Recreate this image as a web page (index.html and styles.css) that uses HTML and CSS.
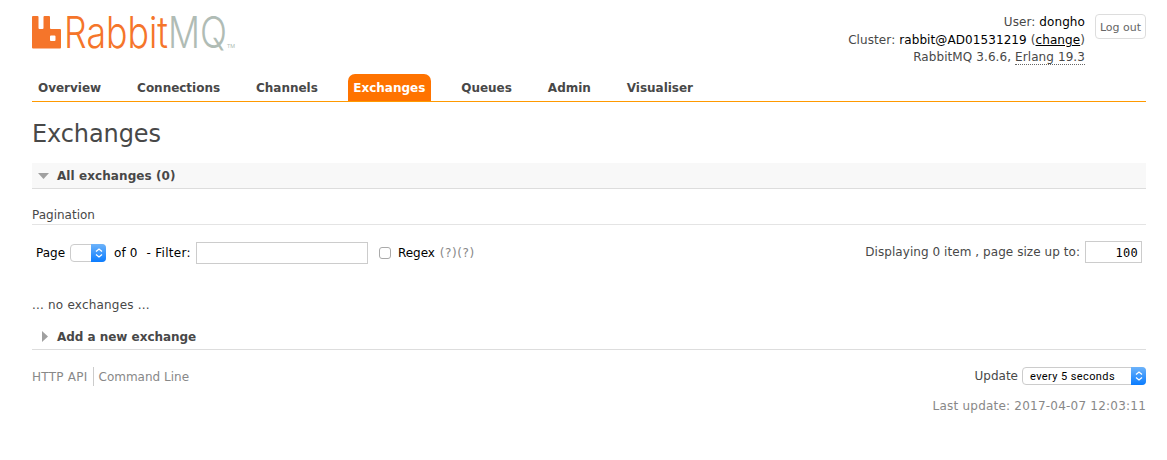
FILE: index.html
```html
<!DOCTYPE html>
<html lang="en">
<head>
<meta charset="utf-8">
<title>RabbitMQ Management</title>
<link rel="stylesheet" href="styles.css">
</head>
<body>
<header class="header">
  <svg class="logo" width="206" height="48" viewBox="0 0 206 48" role="img" aria-label="RabbitMQ">
    <path class="logo-mark" fill-rule="evenodd" d="M0 2Q0 1 1 1H5.500Q6.500 1 6.500 2V13Q6.500 14 7.500 14H10.500Q11.500 14 11.500 13V2Q11.500 1 12.500 1H17Q18 1 18 2V13Q18 14 19 14H28Q29 14 29 15V32.500Q29 33.500 28 33.500H1Q0 33.500 0 32.500ZM18 21.500V25Q18 26 19 26H22.500Q23.500 26 23.500 25V21.500Q23.500 20.500 22.500 20.500H19Q18 20.500 18 21.500Z"/>
    <text class="logo-text rabbit" x="32" y="33" textLength="104" lengthAdjust="spacingAndGlyphs">Rabbit</text>
    <text class="logo-text mq" x="136" y="33" textLength="59" lengthAdjust="spacingAndGlyphs">MQ</text>
    <text class="logo-tm" x="195" y="33" textLength="8" lengthAdjust="spacingAndGlyphs">TM</text>
  </svg>
  <div class="login">
    <div class="details">
      <p>User: <b>dongho</b></p>
      <p>Cluster: <b>rabbit@AD01531219</b> (<a href="#">change</a>)</p>
      <p>RabbitMQ 3.6.6, <abbr>Erlang 19.3</abbr></p>
    </div>
    <button class="logout">Log out</button>
  </div>
</header>
<nav class="tabs">
  <a>Overview</a><a>Connections</a><a>Channels</a><a class="selected">Exchanges</a><a>Queues</a><a>Admin</a><a>Visualiser</a>
</nav>
<main>
  <h1>Exchanges</h1>
  <h2 class="section open"><svg width="11" height="6"><path d="M0 0H11L5.500 6Z"/></svg><span>All exchanges (0)</span></h2>
  <h3>Pagination</h3>
  <div class="pager">
    <span class="page">Page</span>
    <span class="select small"><i><svg width="8" height="10" viewBox="0 0 8 10"><path d="M1 3.500L4 1L7 3.500M1 6.500L4 9L7 6.500"/></svg></i></span>
    <span class="of">of 0</span>
    <span class="filter">- Filter:</span>
    <input class="filter-box" type="text">
    <span class="check"></span>
    <span class="regex">Regex <em>(?)(?)</em></span>
    <span class="showing">Displaying 0 item , page size up to:</span>
    <input class="size" type="text" value="100">
  </div>
  <p class="empty">... no exchanges ...</p>
  <h2 class="section closed"><svg width="6" height="11"><path d="M0 0V11L6 5.500Z"/></svg><span>Add a new exchange</span></h2>
</main>
<footer class="footer">
  <div class="links"><a class="api">HTTP API</a><a>Command Line</a></div>
  <div class="update">
    <div class="rate"><span>Update</span><span class="select wide"><span class="val">every 5 seconds</span><i><svg width="8" height="10" viewBox="0 0 8 10"><path d="M1 3.500L4 1L7 3.500M1 6.500L4 9L7 6.500"/></svg></i></span></div>
    <p class="last">Last update: 2017-04-07 12:03:11</p>
  </div>
</footer>
</body>
</html>
```
FILE: styles.css
```css
* { box-sizing: border-box; }
body {
  margin: 0;
  padding: 0 21px 0 32px;
  background: #fff;
  color: #484848;
  font: 12px/18px Verdana, "DejaVu Sans", sans-serif;
  white-space: nowrap;
}
p, h1, h2, h3 { margin: 0; }
.header { display: flex; justify-content: space-between; height: 74px; }
.logo { margin-top: 15px; overflow: visible; }
.logo-mark { fill: #f5752a; }
.logo-text { font: 300 44px Inter, sans-serif; }
.rabbit { fill: #f5752a; }
.mq { fill: #b0bcb5; }
.logo-tm { font: 6px Roboto, sans-serif; fill: #b0bcb5; }
.login { display: flex; align-items: flex-start; }
.details { padding-top: 14px; text-align: right; line-height: 17.5px; letter-spacing: 0.09px; }
.details p { height: 17.5px; }
.details p:nth-child(2) { line-height: 16.5px; }
.details b { font-weight: normal; color: #000; }
.details a { color: #000; }
.details abbr { display: inline-block; height: 16px; line-height: 16px; border-bottom: 1px dotted #666; }
.logout {
  width: 51px;
  height: 25px;
  margin: 14px 0 0 10px;
  padding: 1px 0 0;
  border: 1px solid #ddd;
  border-radius: 4px;
  background: #fff;
  color: #666;
  font: 11px Verdana, "DejaVu Sans", sans-serif;
}
.tabs { display: flex; gap: 24px; height: 28px; border-bottom: 1px solid #f90; }
.tabs a { padding: 0 6px; height: 27px; line-height: 29px; font-weight: bold; letter-spacing: -0.02px; }
.tabs .selected { background: #ff7300; color: #fff; border-radius: 7px 7px 0 0; padding: 0 6px 0 5.5px; }
h1 { margin-top: 15px; height: 46px; font-size: 24px; line-height: 35px; font-weight: normal; letter-spacing: -0.1px; }
.section { display: flex; align-items: center; height: 26px; padding-left: 6px; border-bottom: 1px solid #ddd; font-size: 12px; }
.section svg { fill: #a0a0a0; }
.open { background: #f8f8f8; }
.open span { margin-left: 8px; letter-spacing: 0.08px; }
.closed { padding-left: 10px; }
.closed span { margin-left: 9px; letter-spacing: -0.03px; }
h3 { margin-top: 16px; height: 20px; border-bottom: 1px solid #e4e4e4; font-size: 12px; line-height: 20px; font-weight: normal; }
.pager { display: flex; align-items: center; height: 55px; padding: 0 4px 0 4px; color: #000; }
.select { display: inline-flex; height: 18px; border: 1px solid #ccc; border-radius: 4px; background: #fff; }
.select i {
  display: flex;
  align-items: center;
  justify-content: center;
  width: 15px;
  height: 18px;
  margin: -1px -1px 0 auto;
  border-radius: 0 4px 4px 0;
  background: linear-gradient(#6db3fa, #0a7cff);
}
.select svg { fill: none; stroke: #fff; stroke-width: 1.3; }
.small { width: 36px; margin-left: 5px; }
.of { margin-left: 8px; letter-spacing: 0.1px; }
.filter { margin-left: 9px; letter-spacing: 0.3px; }
.filter-box { width: 172px; height: 22px; margin: 1px 0 0 5px; border: 1px solid #ccc; }
.check { width: 12px; height: 12px; margin-left: 11px; border: 1px solid #aaa; border-radius: 3px; }
.regex { margin-left: 7px; }
.regex em { font-style: normal; color: #888; letter-spacing: 0.6px; margin-left: 1px; }
.showing { margin: -1px 0 0 auto; color: #484848; letter-spacing: 0.06px; }
.size { width: 57px; height: 22px; margin: -1px 0 0 5px; padding: 2px 3px 0; border: 1px solid #ccc; font: 12px "DejaVu Sans Mono", monospace; letter-spacing: 0.3px; text-align: right; }
.empty { margin-top: 16px; height: 28px; letter-spacing: 0.2px; }
.footer { display: flex; justify-content: space-between; padding-top: 17px; }
.links { display: flex; height: 19px; color: #888; line-height: 20px; }
.links .api { letter-spacing: 0.25px; }
.links a + a { margin-left: 5px; padding-left: 5px; border-left: 1px solid #ccc; }
.update { text-align: right; }
.rate { display: flex; align-items: center; justify-content: flex-end; height: 18px; }
.wide { width: 124px; margin-left: 4px; color: #000; font: 11px/17px Roboto, sans-serif; letter-spacing: 0.4px; }
.val { padding-left: 7px; }
.last { margin-top: 12px; color: #888; letter-spacing: 0.22px; }
```
